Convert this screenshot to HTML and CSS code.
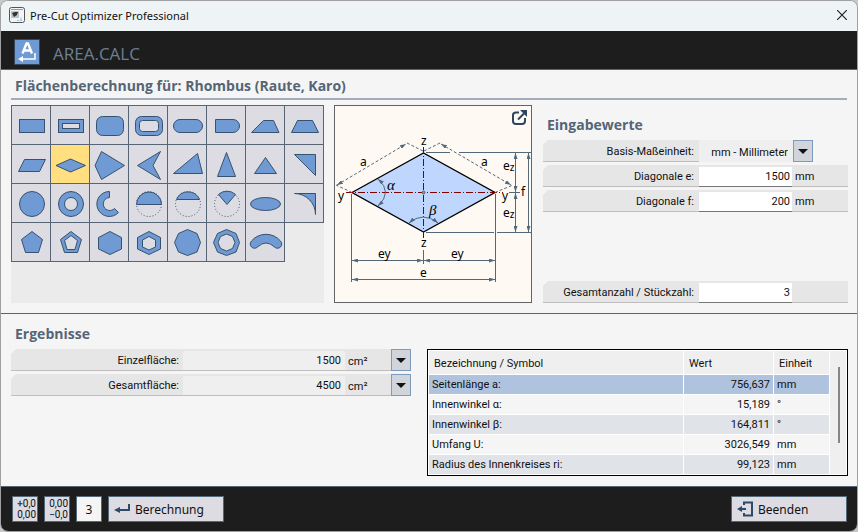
FILE: index.html
```html
<!DOCTYPE html>
<html lang="de">

<head>
    <meta charset="UTF-8">
    <meta name="viewport" content="width=device-width, initial-scale=1.0">
    <title>Pre-Cut Optimizer Professional</title>

    <link rel="stylesheet" href="styles.css">
</head>

<body>
    <div class="window">
        <div class="titlebar">
            <svg class="app-icon" width="16" height="16" viewBox="0 0 16 16">
                <rect x="0.5" y="0.5" width="15" height="15" rx="2" fill="#f4f4f4" stroke="#555" />
                <rect x="2" y="2" width="12" height="1" fill="#999" />
                <rect x="2" y="4" width="8" height="7" fill="#b9c4cb" />
                <path d="M3 6l3-1 3 0-1 3-3 2z" fill="#333" />
                <path d="M8 13.500h2M11 13.500h2M12 10.500v3" stroke="#9bbbe0" />
            </svg>
            <span>Pre-Cut Optimizer Professional</span>
            <button class="close" type="button" aria-label="Schließen">
                <svg width="10" height="10" viewBox="0 0 10 10"><path d="M0 0L10 10M10 0L0 10" stroke="#222" stroke-width="1.2" /></svg>
            </button>
        </div>

        <header>
            <svg width="26" height="26" viewBox="0 0 26 26">
                <rect x="0.5" y="0.5" width="25" height="25" fill="#6f9ad3" stroke="#37475a" />
                <path d="M8.500 14.500L12.500 4.500h1.500L18 14.500M10 11.500h6" fill="none" stroke="#fff" stroke-width="2.400" />
                <path d="M21 14v6H7" fill="none" stroke="#fff" stroke-width="1.500" />
                <path d="M4 20l5-3v6z" fill="#fff" />
            </svg>
            <h1>AREA.CALC</h1>
        </header>

        <main>
            <h2 class="page-title">Flächenberechnung für: Rhombus (Raute, Karo)</h2>

            <div class="top">
                <div class="shapes">
                    <button type="button" aria-label="Rechteck"><svg viewBox="0 0 38 38"><rect x="7.500" y="13.500" width="25" height="13" /></svg></button>
                    <button type="button" aria-label="Rechteckrahmen"><svg viewBox="0 0 38 38"><rect x="7.500" y="13.500" width="25" height="13" /><rect class="hole" x="11.500" y="17.500" width="17" height="5" /></svg></button>
                    <button type="button" aria-label="Abgerundetes Rechteck"><svg viewBox="0 0 38 38"><rect x="6.500" y="10.500" width="27" height="19" rx="6" /></svg></button>
                    <button type="button" aria-label="Abgerundeter Rahmen"><svg viewBox="0 0 38 38"><rect x="6.500" y="10.500" width="27" height="19" rx="6" /><rect class="hole" x="10.500" y="14.500" width="19" height="11" rx="3" /></svg></button>
                    <button type="button" aria-label="Langloch"><svg viewBox="0 0 38 38"><rect x="5.500" y="13.500" width="29" height="13" rx="6.500" /></svg></button>
                    <button type="button" aria-label="Halbes Langloch"><svg viewBox="0 0 38 38"><path d="M8.500 13.500H26a6.500 6.500 0 0 1 0 13H8.500z" /></svg></button>
                    <button type="button" aria-label="Trapez"><svg viewBox="0 0 38 38"><path d="M5.500 26.500L17.500 14.500H27.500L33 26.500z" /></svg></button>
                    <button type="button" aria-label="Gleichschenkliges Trapez"><svg viewBox="0 0 38 38"><path d="M6.500 26.500L12.500 14.500H27.500L33.500 26.500z" /></svg></button>

                    <button type="button" aria-label="Parallelogramm"><svg viewBox="0 0 38 38"><path d="M6.500 26.500L12.500 14.500H33.500L27.500 26.500z" /></svg></button>
                    <button type="button" class="active" aria-label="Rhombus"><svg viewBox="0 0 38 38"><path d="M5 20.500L19.500 14L34.500 20.500L19.500 27z" /></svg></button>
                    <button type="button" aria-label="Drachenviereck"><svg viewBox="0 0 38 38"><path d="M5 20.500L11.500 6.500L34.500 20.500L11.500 34.500z" /></svg></button>
                    <button type="button" aria-label="Pfeilviereck"><svg viewBox="0 0 38 38"><path d="M8.500 20.500L31.500 6.500L24 20.500L31.500 34.500z" /></svg></button>
                    <button type="button" aria-label="Dreieck"><svg viewBox="0 0 38 38"><path d="M5.500 28.500L29.500 8.500L34.500 28.500z" /></svg></button>
                    <button type="button" aria-label="Gleichschenkliges Dreieck"><svg viewBox="0 0 38 38"><path d="M10.500 31.500L19.500 7.500L28.500 31.500z" /></svg></button>
                    <button type="button" aria-label="Gleichseitiges Dreieck"><svg viewBox="0 0 38 38"><path d="M8.500 28.500L19.500 12.500L30.500 28.500z" /></svg></button>
                    <button type="button" aria-label="Rechtwinkliges Dreieck"><svg viewBox="0 0 38 38"><path d="M9.500 9.500H30.500V30.500z" /></svg></button>

                    <button type="button" aria-label="Kreis"><svg viewBox="0 0 38 38"><circle cx="20" cy="20" r="12.500" /></svg></button>
                    <button type="button" aria-label="Kreisring"><svg viewBox="0 0 38 38"><circle cx="20" cy="20" r="12.500" /><circle class="hole" cx="20" cy="20" r="6.500" /></svg></button>
                    <button type="button" aria-label="Kreisringsektor"><svg viewBox="0 0 38 38"><path d="M19.500 7.500A12.500 12.500 0 1 0 28.500 28.500L24.500 24.500A6.500 6.500 0 1 1 19.500 13.500z" /></svg></button>
                    <button type="button" aria-label="Halbkreis"><svg viewBox="0 0 38 38"><circle class="dots" cx="20" cy="20" r="12.500" /><path d="M7.500 20.500A12.500 12.500 0 0 1 32.500 20.500z" /></svg></button>
                    <button type="button" aria-label="Kreissegment"><svg viewBox="0 0 38 38"><circle class="dots" cx="20" cy="20" r="12.500" /><path d="M8.500 15.500A12.500 12.500 0 0 1 31.500 15.500z" /></svg></button>
                    <button type="button" aria-label="Kreissektor"><svg viewBox="0 0 38 38"><circle class="dots" cx="20" cy="20" r="12.500" /><path d="M20 20.500L11.500 10.500A12.500 12.500 0 0 1 28.500 10.500z" /></svg></button>
                    <button type="button" aria-label="Ellipse"><svg viewBox="0 0 38 38"><ellipse cx="19.500" cy="20" rx="15" ry="6.500" /></svg></button>
                    <button type="button" aria-label="Hohlkehle"><svg viewBox="0 0 38 38"><path d="M9.500 9.500H30.500V30.500A21 21 0 0 0 9.500 9.500z" /></svg></button>

                    <button type="button" aria-label="Fünfeck"><svg viewBox="0 0 38 38"><path d="M20 8.500L30.500 16.500L26.500 29.500H13.500L9.500 16.500z" /></svg></button>
                    <button type="button" aria-label="Fünfeckrahmen"><svg viewBox="0 0 38 38"><path d="M20 8.500L30.500 16.500L26.500 29.500H13.500L9.500 16.500z" /><path class="hole" d="M20 12.500L26.500 17.500L24 26.500H16L13.500 17.500z" /></svg></button>
                    <button type="button" aria-label="Sechseck"><svg viewBox="0 0 38 38"><path d="M20 8.500L31.500 14.500V26L20 31.500L8.500 26V14.500z" /></svg></button>
                    <button type="button" aria-label="Sechseckrahmen"><svg viewBox="0 0 38 38"><path d="M20 8.500L31.500 14.500V26L20 31.500L8.500 26V14.500z" /><path class="hole" d="M20 13.500L26.500 17V24L20 27L13.500 24V17z" /></svg></button>
                    <button type="button" aria-label="Vieleck"><svg viewBox="0 0 38 38"><path d="M19.500 6.500L29 10.500L32.500 19.500L29 29L19.500 32.500L10.500 29L6.500 19.500L10.500 10.500z" /></svg></button>
                    <button type="button" aria-label="Vieleckrahmen"><svg viewBox="0 0 38 38"><path d="M19.500 6.500L29 10.500L32.500 19.500L29 29L19.500 32.500L10.500 29L6.500 19.500L10.500 10.500z" /><path class="hole" d="M19.500 11L25.500 13.500L28 19.500L25.500 25.500L19.500 28L13.500 25.500L11 19.500L13.500 13.500z" /></svg></button>
                    <button type="button" aria-label="Bogen"><svg viewBox="0 0 38 38"><path d="M5.500 18A19 19 0 0 1 34.500 18A3.800 3.800 0 0 1 28.500 24Q20 16 11.500 24A3.800 3.800 0 0 1 5.500 18z" /></svg></button>
                </div>

                <div class="drawing">
                    <svg viewBox="5 6 196 196">
                        <defs>
                            <marker id="arrow" viewBox="0 0 6 4" refX="6" refY="2" markerWidth="6" markerHeight="4" orient="auto-start-reverse" markerUnits="userSpaceOnUse">
                                <path d="M0 0L6 2L0 4z" fill="#536878" />
                            </marker>
                        </defs>
                        <!-- Rhombus -->
                        <path d="M22 92.500L93.500 53L165 92.500L93.500 132z" fill="#bfd7ff" stroke="#000" stroke-width="1.400" />
                        <!-- Achsen -->
                        <path class="axis" d="M16 92.500H173" />
                        <path class="axis" d="M93.500 47V139" />
                        <circle cx="93.500" cy="92.500" r="1.500" fill="#999" stroke="#333" stroke-width="0.600" />
                        <!-- Hilfslinien -->
                        <path class="line" d="M96 52.500H120M129 52.500H201M96 132.500H164M167 132.500H201M179 92.500H190M21.500 94V182M165.500 94V182M93.500 150V164" />
                        <path class="line dash" d="M22 92.500L6 85M93 51L75 42M94 51L112 42M165 92.500L183 85" />
                        <!-- Maßlinien -->
                        <path class="dim" d="M22 160.500H93" />
                        <path class="dim" d="M94 160.500H165" />
                        <path class="dim" d="M22 179.500H165" />
                        <path class="dim" d="M185.500 53V92" />
                        <path class="dim" d="M185.500 93V132" />
                        <path class="dim" d="M198.500 53V132" />
                        <path class="dim dash" d="M7 85L76 44" />
                        <path class="dim dash" d="M111 44L181 85" />
                        <path class="dim" d="M48 79Q63 92 48 106" />
                        <path class="dim" d="M79 123Q93 111 108 123" />
                        <!-- Beschriftung -->
                        <text x="91" y="45">z</text>
                        <text x="91" y="147">z</text>
                        <text x="8" y="100">y</text>
                        <text x="172" y="100">y</text>
                        <text x="30" y="66">a</text>
                        <text x="151" y="66">a</text>
                        <text x="173" y="70">e<tspan class="sub" dy="1">z</tspan></text>
                        <text x="173" y="117">e<tspan class="sub" dy="1">z</tspan></text>
                        <text x="191" y="96">f</text>
                        <text x="48" y="158">ey</text>
                        <text x="121" y="158">ey</text>
                        <text x="90" y="177">e</text>
                        <text class="greek" x="57" y="90">α</text>
                        <text class="greek" x="99" y="115">β</text>
                        <!-- Vergrößern -->
                        <path d="M189 12.500H186Q183 12.500 183 15V21Q183 24 186 24H192Q195 24 195 21V18" fill="none" stroke="#2f4560" stroke-width="2" />
                        <path d="M188 19.500L194 13.500" stroke="#2f4560" stroke-width="2" />
                        <path d="M190 10H197V17z" fill="#2f4560" />
                    </svg>
                </div>

                <div class="inputs">
                    <h2>Eingabewerte</h2>
                    <div class="row short">
                        <label for="basis">Basis-Maßeinheit:</label>
                        <div class="select-box basis">
                            <select id="basis">
                                <option>mm - Millimeter</option>
                                <option>cm - Zentimeter</option>
                            </select>
                            <span class="arrow"></span>
                        </div>
                    </div>
                    <div class="row">
                        <label for="diagE">Diagonale e:</label>
                        <input id="diagE" type="text" value="1500">
                        <span class="unit">mm</span>
                    </div>
                    <div class="row">
                        <label for="diagF">Diagonale f:</label>
                        <input id="diagF" type="text" value="200">
                        <span class="unit">mm</span>
                    </div>
                    <div class="row last">
                        <label for="anzahl">Gesamtanzahl / Stückzahl:</label>
                        <input id="anzahl" type="text" value="3">
                    </div>
                </div>
            </div>

            <div class="bottom">
                <div class="results">
                    <h2>Ergebnisse</h2>
                    <div class="row">
                        <label for="einzel">Einzelfläche:</label>
                        <input id="einzel" type="text" value="1500" readonly>
                        <div class="select-box">
                            <select aria-label="Einheit Einzelfläche">
                                <option>cm²</option>
                                <option>m²</option>
                            </select>
                            <span class="arrow"></span>
                        </div>
                    </div>
                    <div class="row">
                        <label for="gesamt">Gesamtfläche:</label>
                        <input id="gesamt" type="text" value="4500" readonly>
                        <div class="select-box">
                            <select aria-label="Einheit Gesamtfläche">
                                <option>cm²</option>
                                <option>m²</option>
                            </select>
                            <span class="arrow"></span>
                        </div>
                    </div>
                </div>

                <div class="table-box">
                    <table>
                        <thead>
                            <tr><th>Bezeichnung / Symbol</th><th class="col-wert">Wert</th><th class="col-einheit">Einheit</th></tr>
                        </thead>
                        <tbody>
                            <tr class="selected"><td>Seitenlänge a:</td><td>756,637</td><td>mm</td></tr>
                            <tr><td>Innenwinkel α:</td><td>15,189</td><td>°</td></tr>
                            <tr><td>Innenwinkel β:</td><td>164,811</td><td>°</td></tr>
                            <tr><td>Umfang U:</td><td>3026,549</td><td>mm</td></tr>
                            <tr><td>Radius des Innenkreises ri:</td><td>99,123</td><td>mm</td></tr>
                        </tbody>
                    </table>
                    <div class="scroll"><div class="thumb"></div></div>
                </div>
            </div>
        </main>

        <footer>
            <button type="button" class="digits"><span><b>+</b>0,0</span><span>0,00</span></button>
            <button type="button" class="digits"><span>0,00</span><span><b>−</b>0,0</span></button>
            <input class="places" type="text" value="3" aria-label="Nachkommastellen">
            <button type="button" class="action">
                <svg width="16" height="12" viewBox="0 0 16 12"><path d="M15 1v6H4" fill="none" stroke="#2f4a68" stroke-width="2" /><path d="M0 7l6-3v6z" fill="#2f4a68" /></svg>
                Berechnung
            </button>
            <button type="button" class="action quit">
                <svg width="16" height="16" viewBox="0 0 16 16"><path d="M7 4V1.500H15V14.500H7V12" fill="none" stroke="#2f4a68" stroke-width="2" /><path d="M0 8l5-3v2h4v2H5v2z" fill="#2f4a68" /></svg>
                Beenden
            </button>
        </footer>
    </div>
</body>

</html>
```
FILE: styles.css
```css
* {
    box-sizing: border-box;
}

body {
    margin: 0;
    background-color: #c8c8c8;
    font-family: Roboto, "Liberation Sans", sans-serif;
    font-size: 11px;
    color: #111;
}

button,
input,
select {
    margin: 0;
    padding: 0;
    border: 0;
    border-radius: 0;
    font: inherit;
    color: inherit;
}

h1,
h2 {
    margin: 0;
}

h2 {
    font-family: "Open Sans", "Noto Sans", sans-serif;
    font-size: 14px;
    line-height: 20px;
    color: #566575;
}

.window {
    min-height: 100vh;
    display: flex;
    flex-direction: column;
    border: 1px solid #a0a0a0;
    border-radius: 8px;
    background-color: #f5f5f5;
    overflow: hidden;
}

.titlebar {
    height: 30px;
    padding: 0 10px 2px 8px;
    display: flex;
    align-items: center;
    gap: 5px;
    background-color: #eef4f6;
    font-family: "Noto Sans", "Open Sans", sans-serif;
}

.close {
    margin-left: auto;
    display: flex;
    background: none;
}

header {
    height: 39px;
    padding: 4px 13px 0;
    display: flex;
    align-items: center;
    gap: 13px;
    background-color: #1d1d1d;
    border-bottom: 1px solid #566575;
}

h1 {
    padding-top: 2px;
    font-family: "Open Sans", "Noto Sans", sans-serif;
    font-size: 17px;
    font-weight: normal;
    color: #6d7f92;
}

main {
    flex: 1;
}

.page-title {
    margin: 6px 10px 5px;
    padding: 0 4px 2px;
    border-bottom: 2px solid #a4abbb;
}

.top {
    display: grid;
    grid-template-columns: 313px 198px 1fr;
    gap: 10px;
    padding: 0 9px 10px 10px;
    border-bottom: 1px solid #566575;
}

/* Formauswahl */
.shapes {
    display: grid;
    grid-template-columns: repeat(8, 38px);
    grid-auto-rows: 38px;
    gap: 1px;
    padding: 1px;
    background-color: #ebebeb;
}

.shapes button {
    background-color: #dddce2;
    box-shadow: 0 0 0 1px #566575;
}

.shapes button.active {
    background-color: #ffdf80;
}

.shapes svg {
    display: block;
    fill: #6f9ad3;
    stroke: #37526f;
}

.shapes .hole {
    fill: #dddce2;
}

.shapes .dots {
    fill: none;
    stroke-dasharray: 1 2;
}

/* Zeichnung */
.drawing {
    height: 198px;
    border: 1px solid #646464;
    background-color: #fefaf3;
}

.drawing svg {
    display: block;
    font-family: "Noto Sans", sans-serif;
    font-size: 12px;
}

.axis {
    stroke: #800000;
    stroke-dasharray: 7 2 1 2;
}

.line,
.dim {
    fill: none;
    stroke: #536878;
}

.dim {
    marker-start: url(#arrow);
    marker-end: url(#arrow);
}

.dash {
    stroke-dasharray: 3 2;
}

.sub {
    font-size: 10px;
}

.greek {
    font-family: "Liberation Serif", serif;
    font-size: 15px;
    font-style: italic;
}

/* Eingabe- und Ergebniszeilen */
.inputs {
    display: flex;
    flex-direction: column;
    gap: 3px;
    padding-left: 1px;
}

.inputs h2 {
    margin: 10px 4px 2px;
}

.row {
    height: 22px;
    display: flex;
    background-color: #e6e6e6;
    border-bottom: 1px solid #bebebe;
    clip-path: polygon(5px 0, 100% 0, 100% 100%, 0 100%, 0 5px);
}

.row label {
    width: 156px;
    padding-right: 5px;
    line-height: 24px;
    text-align: right;
}

.row input {
    width: 93px;
    height: 20px;
    margin-top: 2px;
    padding-right: 2px;
    text-align: right;
    background-color: #fff;
    border-bottom: 1px solid #777;
}

.row .unit {
    padding-left: 3px;
    line-height: 24px;
}

.row.short {
    width: 270px;
}

.row.last {
    margin-top: auto;
}

.select-box {
    position: relative;
    width: 66px;
    height: 22px;
}

.select-box select {
    width: 100%;
    height: 22px;
    padding: 2px 20px 0 3px;
    appearance: none;
    background: none;
}

.basis {
    width: 114px;
}

.basis select {
    padding-right: 25px;
    text-align-last: right;
    background-color: #efefef;
}

.arrow {
    position: absolute;
    top: 0;
    right: 0;
    width: 20px;
    height: 22px;
    display: flex;
    justify-content: center;
    align-items: center;
    background-color: #d1d4da;
    border: 1px solid #7d9bbd;
    pointer-events: none;
}

.arrow::after {
    content: "";
    border: 5px solid transparent;
    border-top-color: #111;
    border-bottom: 0;
}

.bottom {
    display: grid;
    grid-template-columns: 400px 1fr;
    gap: 16px;
    padding: 10px 9px 10px 10px;
}

.results {
    display: flex;
    flex-direction: column;
    gap: 3px;
}

.results h2 {
    margin: 0 4px 2px;
}

.results .row label {
    width: 172px;
    padding-right: 4px;
}

.results .row input {
    width: 162px;
    height: 19px;
    padding-right: 4px;
    background-color: #efefef;
    border-bottom: 0;
}

/* Tabelle */
.table-box {
    height: 127px;
    margin-top: 25px;
    padding: 1px;
    display: flex;
    border: 1px solid #000;
    background-color: #fff;
    overflow: hidden;
}

table {
    flex: 1;
    border-collapse: collapse;
    table-layout: fixed;
}

th,
td {
    height: 20px;
    padding: 0 3px;
    text-align: left;
    font-weight: normal;
    border-right: 1px solid #fff;
    border-bottom: 1px solid #fff;
}

th {
    height: 23px;
    padding: 2px 5px 0;
    background-color: #efefef;
}

td {
    background-color: #f5f5f5;
}

td:nth-child(2) {
    text-align: right;
}

.col-wert {
    width: 90px;
}

.col-einheit {
    width: 56px;
}

tr:nth-child(odd) td {
    background-color: #e0e3e8;
}

tr.selected td {
    background-color: #afc3de;
}

.scroll {
    width: 16px;
    padding: 16px 6px 0 8px;
    background-color: #efefef;
}

.thumb {
    width: 2px;
    height: 76px;
    background-color: #858585;
}

/* Fußleiste */
footer {
    height: 45px;
    padding: 0 10px 0 11px;
    display: flex;
    align-items: center;
    gap: 6px;
    background-color: #1d1d1d;
    border-top: 1px solid #566575;
    font-family: "Noto Sans", sans-serif;
    font-size: 12px;
}

footer button,
footer .places {
    height: 26px;
    background-color: #dddce2;
    border: 1px solid #536878;
}

.digits {
    width: 26px;
    padding-right: 1px;
    display: flex;
    flex-direction: column;
    justify-content: center;
    font-family: Roboto, sans-serif;
    font-size: 10px;
    line-height: 11px;
    text-align: right;
}

.digits span {
    width: 100%;
}

.digits b {
    color: #2f4a68;
}

footer .places {
    width: 26px;
    text-align: center;
    background-color: #f5f5f5;
}

.action {
    width: 116px;
    padding-left: 5px;
    display: flex;
    align-items: center;
    gap: 5px;
}

.quit {
    margin-left: auto;
}
```
